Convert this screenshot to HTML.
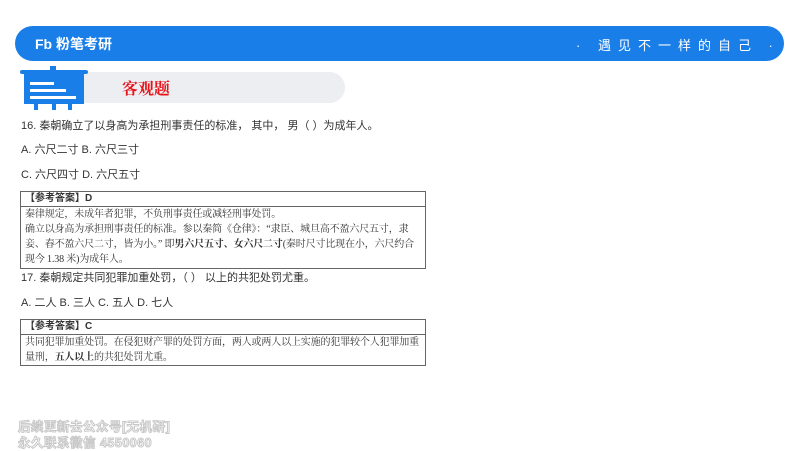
<!DOCTYPE html>
<html><head><meta charset="utf-8"><style>
*{margin:0;padding:0;box-sizing:border-box}
body{width:800px;height:450px;background:#fff;position:relative;overflow:hidden;font-family:"Liberation Sans","Noto Sans CJK SC",sans-serif;color:#333}
.banner{position:absolute;left:15px;top:26px;width:769px;height:35px;background:#1a7ee9;border-radius:18px}
.logo{position:absolute;left:35px;top:34px;color:#fff;font-weight:bold;font-size:14px}
.slogan{position:absolute;left:576px;top:35px;color:#fff;font-size:13px;letter-spacing:7px}
.gray{position:absolute;left:80px;top:72px;width:265px;height:31px;background:#eceef1;border-radius:0 16px 16px 0}
.title{position:absolute;left:122px;top:76px;color:#e8141b;font-family:"Liberation Serif","Noto Serif CJK SC",serif;font-weight:bold;font-size:16px}
.t{position:absolute;left:21px;font-size:11px;color:#333}
.box{position:absolute;left:20px;width:406px;border:1px solid #666;font-family:"Liberation Serif","Noto Serif CJK SC",serif;font-size:10px;color:#333;line-height:15px}
.box .h{border-bottom:1px solid #666;padding-left:4px;height:15px;font-weight:bold;line-height:14px;font-family:"Liberation Sans","Noto Sans CJK SC",sans-serif}
.box .b{padding:0 3px 0 4px;letter-spacing:-0.15px}
.wm{position:absolute;left:18px;font-size:12.5px;font-weight:bold;color:#fff;-webkit-text-stroke:1px #c8c8c8;letter-spacing:0.5px}
</style></head><body>
<div class="banner"></div>
<div class="logo">Fb 粉笔考研</div>
<div class="slogan">· 遇见不一样的自己 ·</div>
<div class="gray"></div>
<svg style="position:absolute;left:20px;top:66px" width="68" height="44">
<rect x="30" y="0" width="6" height="4" fill="#1a7ee9"/>
<rect x="0" y="4" width="68" height="4" rx="2" fill="#1a7ee9"/>
<rect x="4" y="8" width="60" height="30" fill="#1a7ee9"/>
<rect x="10" y="16" width="24" height="3" fill="#fff"/>
<rect x="10" y="23" width="36" height="3" fill="#fff"/>
<rect x="10" y="30" width="46" height="3" fill="#fff"/>
<rect x="14" y="38" width="4" height="6" fill="#1a7ee9"/>
<rect x="32" y="38" width="4" height="6" fill="#1a7ee9"/>
<rect x="48" y="38" width="4" height="6" fill="#1a7ee9"/>
</svg>
<div class="title">客观题</div>
<div class="t" style="top:117px">16. 秦朝确立了以身高为承担刑事责任的标准， 其中， 男（ ）为成年人。</div>
<div class="t" style="top:141px">A. 六尺二寸 B. 六尺三寸</div>
<div class="t" style="top:166px">C. 六尺四寸 D. 六尺五寸</div>
<div class="box" style="top:191px;height:78px">
<div class="h">【参考答案】D</div>
<div class="b">秦律规定，未成年者犯罪，不负刑事责任或减轻刑事处罚。<br>确立以身高为承担刑事责任的标准。参以秦简《仓律》：“隶臣、城旦高不盈六尺五寸，隶妾、舂不盈六尺二寸，皆为小。” 即<b>男六尺五寸、女六尺二寸</b>(秦时尺寸比现在小，六尺约合现今 1.38 米)为成年人。</div>
</div>
<div class="t" style="top:269px">17. 秦朝规定共同犯罪加重处罚，（ ） 以上的共犯处罚尤重。</div>
<div class="t" style="top:294px">A. 二人 B. 三人 C. 五人 D. 七人</div>
<div class="box" style="top:319px;height:47px">
<div class="h">【参考答案】C</div>
<div class="b">共同犯罪加重处罚。在侵犯财产罪的处罚方面，两人或两人以上实施的犯罪较个人犯罪加重量刑，<b>五人以上</b>的共犯处罚尤重。</div>
</div>
<div class="wm" style="top:416px">后续更新去公众号[无机研]</div>
<div class="wm" style="top:432px">永久联系微信 4550060</div>
</body></html>
